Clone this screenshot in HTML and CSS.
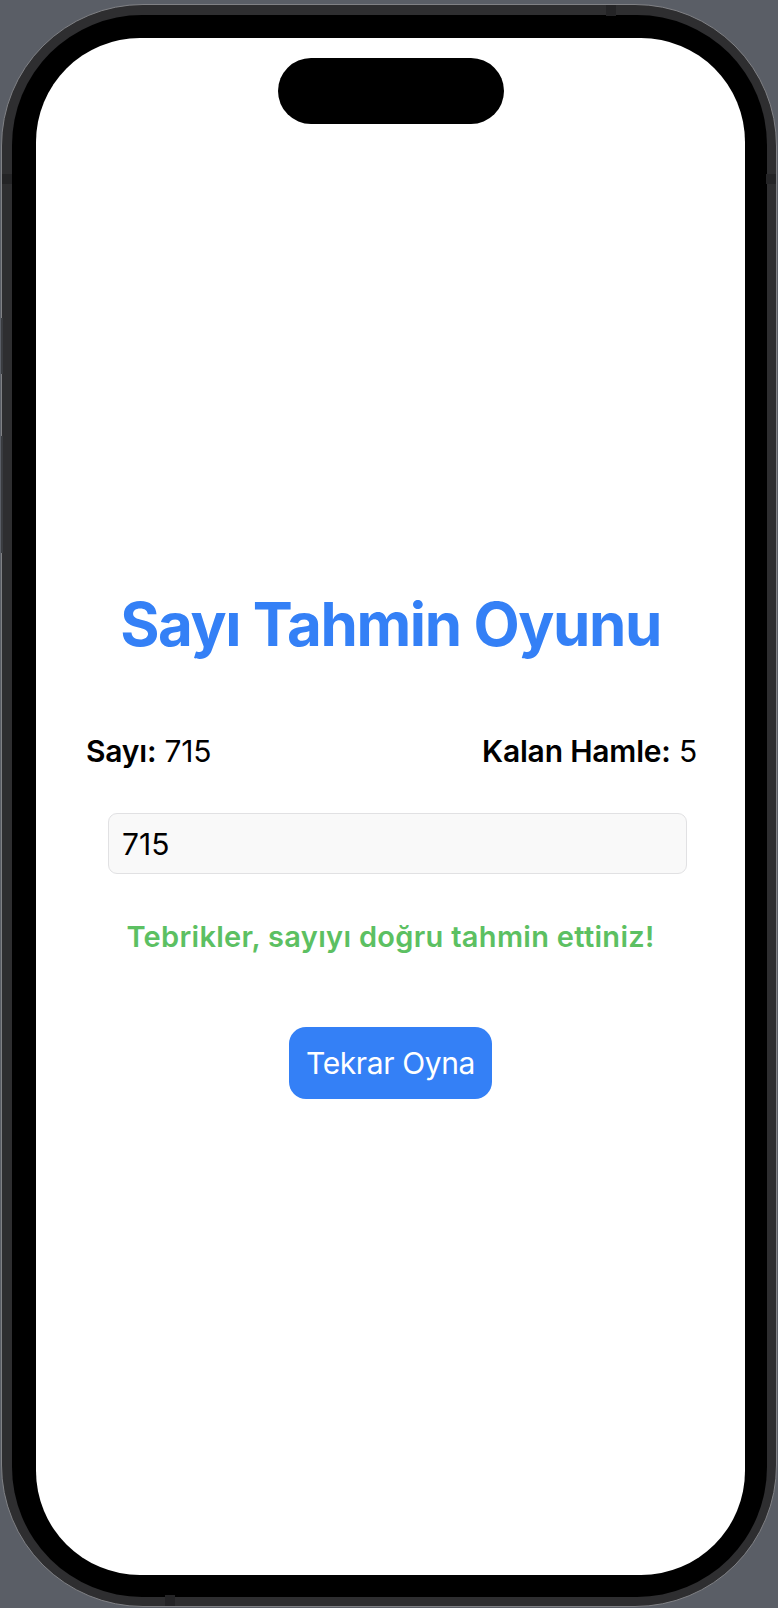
FILE: index.html
```html
<!DOCTYPE html>
<html lang="tr">
<head>
<meta charset="utf-8">
<title>Sayı Tahmin Oyunu</title>
<link rel="stylesheet" href="styles.css">
</head>
<body>
<div class="phone">
  <span class="band band-top"></span>
  <span class="band band-right"></span>
  <span class="band band-left"></span>
  <span class="band band-bottom"></span>
  <span class="side-btn side-btn-1"></span>
  <span class="side-btn side-btn-2"></span>
  <div class="bezel">
    <div class="screen">
      <div class="island"></div>
      <h1 class="title">Sayı Tahmin Oyunu</h1>
      <div class="stats">
        <div class="stat"><b>Sayı:</b> 715</div>
        <div class="stat"><b>Kalan Hamle:</b> 5</div>
      </div>
      <div class="guess-input">715</div>
      <p class="message">Tebrikler, sayıyı doğru tahmin ettiniz!</p>
      <button class="replay">Tekrar Oyna</button>
    </div>
  </div>
</div>
</body>
</html>
```

FILE: styles.css
```css
* { box-sizing: border-box; }

html, body {
  margin: 0;
  padding: 0;
}

body {
  width: 778px;
  height: 1608px;
  background: #5a5e66;
  overflow: hidden;
  font-family: Inter, "Noto Sans", "Liberation Sans", sans-serif;
}

.phone {
  position: relative;
  margin: 4px 0 0 1px;
  width: 776px;
  height: 1603px;
  border-radius: 142px;
  background: #2e2e30;
  border: 1px solid #808185;
  padding: 10px 9px 9px 10px;
}

.band {
  position: absolute;
  background: #242426;
}
.band-top { top: 0; left: 604px; width: 10px; height: 11px; }
.band-bottom { bottom: 0; left: 163px; width: 10px; height: 11px; }
.band-right { right: 0; top: 169px; width: 10px; height: 10px; }
.band-left { left: 0; top: 169px; width: 10px; height: 10px; }

.side-btn {
  position: absolute;
  left: -1px;
  width: 2px;
  background: #3a3c40;
}
.side-btn-1 { top: 313px; height: 56px; }
.side-btn-2 { top: 431px; height: 117px; }

.bezel {
  width: 100%;
  height: 100%;
  background: #000;
  border-radius: 130px;
  padding: 23px 22px 22px 24px;
}

.screen {
  width: 100%;
  height: 100%;
  background: #fff;
  border-radius: 104px;
  padding-top: 20px;
  display: flex;
  flex-direction: column;
  align-items: center;
  color: #000;
}

.island {
  width: 226px;
  height: 66px;
  border-radius: 33px;
  background: #000;
}

.title {
  margin: 464px 0 0 0;
  font-size: 60px;
  line-height: 72px;
  font-weight: 700;
  color: #3480f6;
  letter-spacing: -1.4px;
}

.stats {
  margin-top: 73px;
  width: 100%;
  padding: 0 48px 0 50px;
  display: flex;
  justify-content: space-between;
  font-size: 30px;
  line-height: 36px;
  letter-spacing: -0.2px;
}

.stat b { font-weight: 600; }

.guess-input {
  margin-top: 44px;
  align-self: flex-start;
  margin-left: 72px;
  width: 579px;
  height: 61px;
  border: 1px solid #e1e1e3;
  border-radius: 9px;
  background: #f9f9f9;
  padding-left: 13px;
  display: flex;
  align-items: center;
  font-size: 30px;
  line-height: 36px;
}

.message {
  margin: 45px 0 0 0;
  font-size: 29px;
  line-height: 35px;
  font-weight: 600;
  color: #5cc062;
  letter-spacing: 0.3px;
}

.replay {
  margin-top: 73px;
  border: none;
  border-radius: 17px;
  background: #3480f6;
  color: #fff;
  font-family: inherit;
  font-size: 30px;
  line-height: 36px;
  padding: 18px 17px;
  letter-spacing: -0.4px;
}
```
